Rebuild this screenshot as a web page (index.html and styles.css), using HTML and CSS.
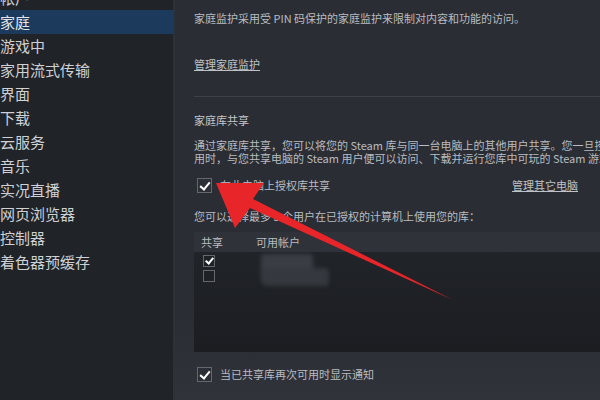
FILE: index.html
```html
<!DOCTYPE html>
<html lang="zh-CN">
<head>
    <meta charset="UTF-8">
    <title>Steam 设置 - 家庭</title>
    <link rel="stylesheet" href="styles.css">
</head>
<body>
    <div class="window">
        <ul class="sidebar">
            <li>帐户</li>
            <li class="active">家庭</li>
            <li>游戏中</li>
            <li>家用流式传输</li>
            <li>界面</li>
            <li>下载</li>
            <li>云服务</li>
            <li>音乐</li>
            <li>实况直播</li>
            <li>网页浏览器</li>
            <li>控制器</li>
            <li>着色器预缓存</li>
        </ul>

        <div class="main">
            <p class="line first">家庭监护采用受 PIN 码保护的家庭监护来限制对内容和功能的访问。</p>
            <a class="link manage-family">管理家庭监护</a>

            <div class="divider"></div>

            <p class="line heading">家庭库共享</p>
            <p class="line para">通过家庭库共享，您可以将您的 Steam 库与同一台电脑上的其他用户共享。您一旦授权库共享，在您的库不被您本人使用<br>用时，与您共享电脑的 Steam 用户便可以访问、下载并运行您库中可玩的 Steam 游戏。</p>

            <div class="check-row authorize">
                <span class="checkbox checked"></span>
                <span class="label">在此电脑上授权库共享</span>
                <a class="link other-pc">管理其它电脑</a>
            </div>

            <p class="line choose">您可以选择最多 5 个用户在已授权的计算机上使用您的库：</p>

            <div class="table">
                <div class="thead">
                    <span class="col-share">共享</span>
                    <span class="col-account">可用帐户</span>
                </div>
                <div class="tbody">
                    <div class="share-col">
                        <span class="checkbox small checked"></span>
                        <span class="checkbox small"></span>
                    </div>
                    <div class="blurred">
                        <span class="blob b1"></span>
                        <span class="blob b2"></span>
                    </div>
                </div>
            </div>

            <div class="check-row notify">
                <span class="checkbox checked"></span>
                <span class="label">当已共享库再次可用时显示通知</span>
            </div>

            <svg class="arrow" width="425" height="400" viewBox="175 0 425 400">
                <polygon points="216,183 235,228 250,208 453,300 253,199 264,183" fill="#e8262a"/>
            </svg>
        </div>
    </div>
</body>
</html>
```

FILE: styles.css
```css
html, body {
    margin: 0;
    padding: 0;
}
body {
    width: 600px;
    height: 400px;
    overflow: hidden;
    background-color: #2a2d33;
    font-family: "Noto Sans CJK SC", "Noto Sans", sans-serif;
}
.window {
    display: flex;
    height: 400px;
}
.sidebar {
    list-style: none;
    margin: 0;
    padding: 0;
    width: 173px;
    flex-shrink: 0;
    background-color: #202328;
    border-right: 2px solid #2e3137;
    margin-top: -14px;
    height: 414px;
}
.sidebar li {
    height: 24px;
    line-height: 24px;
    font-size: 15px;
    color: #cfd1d5;
    margin-left: -2px;
    padding-left: 2px;
    white-space: nowrap;
}
.sidebar li.active {
    background-color: #1c3a5b;
    color: #e4e6ea;
}
.main {
    position: relative;
    flex: 1;
    padding-left: 19px;
    overflow: hidden;
    background: linear-gradient(#2a2d33 0%, #2a2d33 80%, #30333a 100%);
}
.line {
    margin: 0;
    font-size: 11px;
    line-height: 13px;
    color: #b9bcc1;
    white-space: nowrap;
}
.first {
    margin-top: 12px;
}
.link {
    display: inline-block;
    font-size: 11px;
    line-height: 13px;
    color: #bfc2c6;
    text-decoration: underline;
    white-space: nowrap;
}
.manage-family {
    margin-top: 33px;
}
.divider {
    height: 1px;
    background-color: #3d4047;
    margin-top: 22px;
}
.heading {
    margin-top: 17px;
    color: #c4c6ca;
}
.para {
    margin-top: 12px;
}
.check-row {
    display: flex;
    align-items: center;
    height: 16px;
}
.authorize {
    margin-top: 12px;
    padding-left: 3px;
}
.checkbox {
    width: 13px;
    height: 13px;
    border: 1px solid #64676d;
    background-color: #2c2f35;
    position: relative;
    flex-shrink: 0;
}
.checkbox.checked::after {
    content: "";
    position: absolute;
    left: 4px;
    top: 1px;
    width: 4px;
    height: 8px;
    border: solid #ffffff;
    border-width: 0 2px 2px 0;
    transform: rotate(40deg);
}
.checkbox.small {
    width: 10px;
    height: 10px;
    background-color: #1e2126;
}
.checkbox.small.checked::after {
    left: 3px;
    top: 0;
    width: 3px;
    height: 6px;
}
.label {
    margin-left: 8px;
    font-size: 11px;
    color: #b9bcc1;
    white-space: nowrap;
}
.other-pc {
    margin-left: auto;
    margin-right: 22px;
}
.choose {
    margin-top: 17px;
}
.table {
    margin-top: 9px;
    height: 120px;
    background: linear-gradient(#22252a, #1b1d21);
}
.thead {
    display: flex;
    align-items: center;
    height: 20px;
    background-color: #2f3239;
    font-size: 11px;
    color: #b9bcc1;
}
.col-share {
    width: 62px;
    padding-left: 7px;
    box-sizing: border-box;
}
.tbody {
    display: flex;
}
.share-col {
    display: flex;
    flex-direction: column;
    gap: 3px;
    padding: 3px 0 0 9px;
    width: 58px;
}
.blurred {
    position: relative;
    width: 80px;
    height: 36px;
    margin-top: 2px;
    filter: blur(2px);
}
.blob {
    position: absolute;
    background-color: #3a3d44;
    border-radius: 4px;
}
.b1 {
    left: 0;
    top: 0;
    width: 52px;
    height: 30px;
}
.b2 {
    left: 2px;
    top: 14px;
    width: 66px;
    height: 18px;
    background-color: #35383e;
}
.notify {
    margin-top: 14px;
    padding-left: 3px;
}
.arrow {
    position: absolute;
    left: 0;
    top: 0;
}
```
